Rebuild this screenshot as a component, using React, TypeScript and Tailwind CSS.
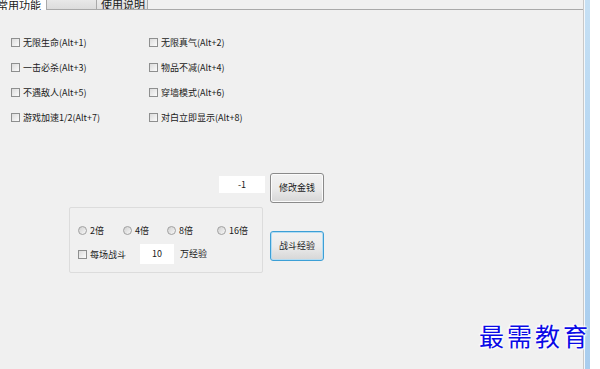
import React from "react";

// Win7-style trainer window, tab "常用功能"

const FONT = "font-['Noto_Sans_CJK_SC','Noto_Sans',sans-serif]";

function CheckBox({ label }: { label: string }) {
  return (
    <div className="flex items-center h-[13px]">
      <span className="w-[9px] h-[9px] border border-[#8e8f8f] bg-gradient-to-br from-[#dcdcdc] to-[#fbfbfb] shrink-0" />
      <span className="ml-[3px] text-[9px] leading-none text-[#1a1a1a] whitespace-nowrap">{label}</span>
    </div>
  );
}

function Radio({ label }: { label: string }) {
  return (
    <div className="flex items-center h-[13px]">
      <span className="w-[9px] h-[9px] rounded-full border border-[#a0a0a0] bg-gradient-to-br from-[#d0d0d0] to-[#f8f8f8] shrink-0" />
      <span className="ml-[3px] text-[9px] leading-none text-[#1a1a1a] whitespace-nowrap">{label}</span>
    </div>
  );
}

function WinButton({ label, focused }: { label: string; focused?: boolean }) {
  return (
    <div
      className={`w-[54px] h-[30px] rounded-[3px] border flex items-center justify-center text-[9px] text-[#1a1a1a] bg-gradient-to-b from-[#f2f2f2] via-[#ebebeb] to-[#d6d6d6] ${
        focused ? "border-[#3c9fd6] shadow-[inset_0_0_0_1px_#b4dcf2]" : "border-[#8a8a8a] shadow-[inset_0_0_0_1px_#fbfbfb]"
      }`}
    >
      {label}
    </div>
  );
}

const cheats = [
  ["无限生命(Alt+1)", "无限真气(Alt+2)"],
  ["一击必杀(Alt+3)", "物品不减(Alt+4)"],
  ["不遇敌人(Alt+5)", "穿墙模式(Alt+6)"],
  ["游戏加速1/2(Alt+7)", "对白立即显示(Alt+8)"],
];

export default function App() {
  return (
    <div className={`relative w-[600px] h-[369px] overflow-hidden bg-white flex ${FONT}`}>
      {/* main panel */}
      <div className="w-[583px] h-full bg-[#f0f0f0] flex flex-col">
        {/* tab header (scrolled, top half hidden) */}
        <div className="flex h-[10px] shrink-0">
          <div className="w-[46px] bg-white flex items-end justify-center overflow-hidden">
            <span className="text-[11px] leading-none text-[#1a1a1a] -mb-[1px] -ml-[8px] whitespace-nowrap">常用功能</span>
          </div>
          <div className="w-[51px] bg-gradient-to-b from-[#e8e8e8] to-[#dcdcdc] border-l border-r border-b border-[#a9a9a9]" />
          <div className="w-[51px] bg-gradient-to-b from-[#ececec] to-[#e0e0e0] border-r border-b border-[#a9a9a9] flex items-end justify-center overflow-hidden">
            <span className="text-[11px] leading-none text-[#1a1a1a] -mb-[1px] ml-[2px] whitespace-nowrap">使用说明</span>
          </div>
          <div className="flex-1 border-b border-[#a9a9a9]" />
        </div>

        {/* cheat checkboxes */}
        <div className="pl-[11px] pt-[26px] flex flex-col gap-[12px]">
          {cheats.map(([a, b]) => (
            <div key={a} className="flex">
              <div className="w-[138px]">
                <CheckBox label={a} />
              </div>
              <CheckBox label={b} />
            </div>
          ))}
        </div>

        {/* money row */}
        <div className="flex items-start pl-[219px] mt-[49px]">
          <div className="mt-[3px] w-[46px] h-[17px] bg-white flex items-center justify-center text-[9px] text-[#1a1a1a]">
            -1
          </div>
          <div className="ml-[5px]">
            <WinButton label="修改金钱" />
          </div>
        </div>

        {/* exp row */}
        <div className="flex items-start pl-[69px] mt-[4px]">
          <div className="w-[194px] h-[66px] border border-[#dcdcdc] rounded-[2px] flex flex-col pl-[8px] pt-[16px]">
            <div className="flex">
              <div className="w-[45px]"><Radio label="2倍" /></div>
              <div className="w-[44px]"><Radio label="4倍" /></div>
              <div className="w-[50px]"><Radio label="8倍" /></div>
              <Radio label="16倍" />
            </div>
            <div className="flex items-center mt-[7px]">
              <div className="w-[62px]"><CheckBox label="每场战斗" /></div>
              <div className="w-[34px] h-[20px] bg-white flex items-center justify-center text-[9px] text-[#1a1a1a]">10</div>
              <span className="ml-[6px] text-[9px] text-[#1a1a1a]">万经验</span>
            </div>
          </div>
          <div className="ml-[7px] mt-[24px]">
            <WinButton label="战斗经验" focused />
          </div>
        </div>
      </div>

      {/* right edge: control border + window frame */}
      <div className="w-[1px] h-full bg-[#c8c8c8]" />
      <div className="w-[1px] h-full bg-[#f4f8fb]" />
      <div className="w-[5px] h-full bg-gradient-to-b from-[#c6e0f4] via-[#b3d5f2] to-[#a9cdee]" />

      {/* watermark */}
      <div className="absolute left-[479px] top-[323px] text-[25px] leading-none tracking-[3px] text-[#0a0ae6] [text-shadow:0_0_2px_#fff,0_0_3px_#fff,1px_1px_2px_#fff,-1px_-1px_2px_#fff]">
        最需教育
      </div>
    </div>
  );
}
